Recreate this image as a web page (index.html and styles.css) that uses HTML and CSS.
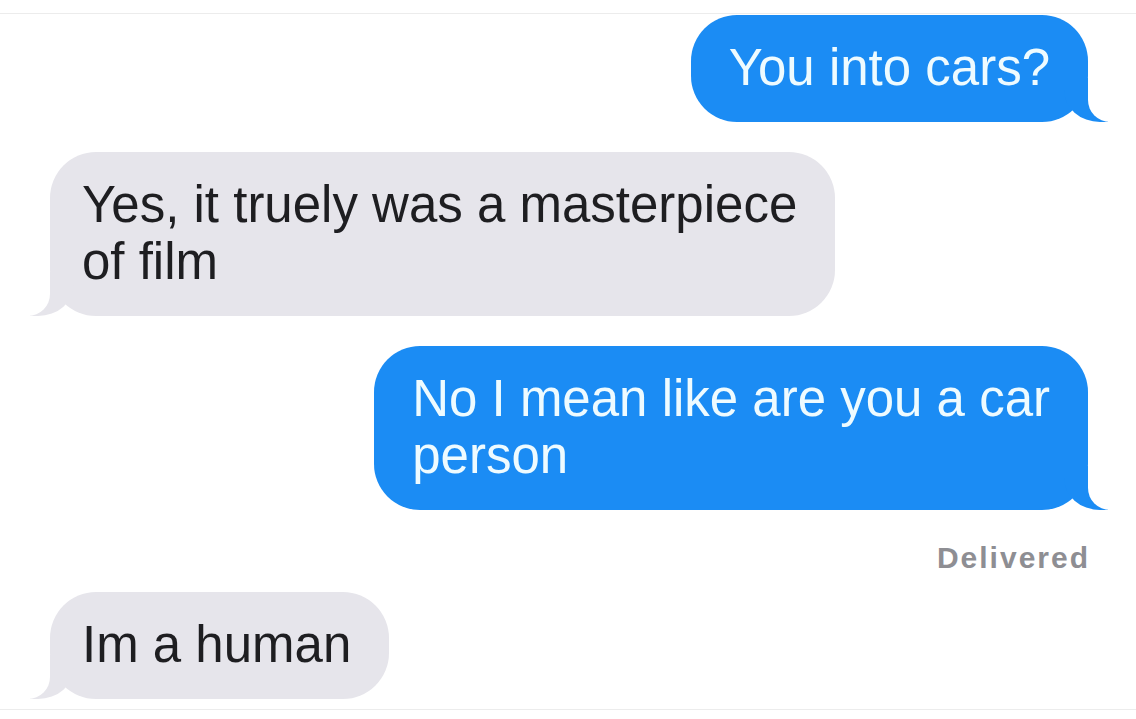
FILE: index.html
```html
<!DOCTYPE html>
<html lang="en">
<head>
  <meta charset="UTF-8" />
  <meta name="viewport" content="width=device-width, initial-scale=1.0"/>
  <title>Messages</title>
  <link rel="stylesheet" href="styles.css">
</head>
<body>

<div class="thread">
  <div class="msg sent">You into cars?</div>
  <div class="msg received">Yes, it truely was a masterpiece<br>of film</div>
  <div class="msg sent">No I mean like are you a car<br>person</div>
  <div class="status">Delivered</div>
  <div class="msg received last">Im a human</div>
</div>

</body>
</html>
```

FILE: styles.css
```css
body {
  margin: 0;
  background: #fff;
  font-family: 'Liberation Sans', Arial, sans-serif;
}
.thread {
  margin-top: 13px;
  height: 694px;
  padding-top: 1px;
  border-top: 1px solid #ececec;
  border-bottom: 1px solid #ececec;
  display: flex;
  flex-direction: column;
  gap: 30px;
  box-sizing: border-box;
  height: 697px;
}
.msg {
  position: relative;
  font-size: 51px;
  line-height: 57px;
  padding: 24px 38px 26px;
  border-radius: 46px;
}
.sent {
  align-self: flex-end;
  margin-right: 48px;
  background: #1b8cf4;
  color: #eefbff;
}
.received {
  align-self: flex-start;
  margin-left: 50px;
  padding-left: 32px;
  background: #e6e5eb;
  color: #1e1e21;
}
.msg::before,
.msg::after {
  content: "";
  position: absolute;
  bottom: 0;
  height: 44px;
}
.sent::before {
  right: -20px;
  width: 44px;
  background: #1b8cf4;
  border-bottom-left-radius: 36px 32px;
}
.sent::after {
  right: -56px;
  width: 56px;
  background: #fff;
  border-bottom-left-radius: 22px;
}
.received::before {
  left: -20px;
  width: 44px;
  background: #e6e5eb;
  border-bottom-right-radius: 36px 32px;
}
.received::after {
  left: -56px;
  width: 56px;
  background: #fff;
  border-bottom-right-radius: 22px;
}
.status {
  align-self: flex-end;
  margin-right: 46px;
  font-size: 30px;
  line-height: 36px;
  font-weight: bold;
  letter-spacing: 2px;
  color: #8e8e93;
}
.last {
  margin-top: -14px;
}
```
